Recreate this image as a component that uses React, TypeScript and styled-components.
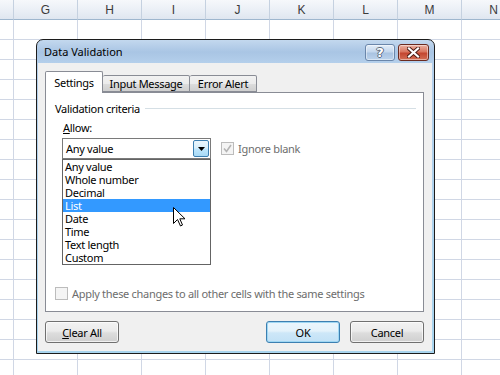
import React from 'react';
import styled, { createGlobalStyle } from 'styled-components';

const GlobalStyle = createGlobalStyle`
    html, body {
        margin: 0;
        padding: 0;
        background: #ffffff;
        overflow: hidden;
    }
    body {
        font-family: 'Noto Sans', 'Liberation Sans', sans-serif;
        font-size: 11px;
        color: #000;
    }
`;

const columns = ['', 'G', 'H', 'I', 'J', 'K', 'L', 'M', 'N'];
const rowCount = 18;
const listItems = ['Any value', 'Whole number', 'Decimal', 'List', 'Date', 'Time', 'Text length', 'Custom'];

const Sheet = styled.div`
    position: relative;
    width: 500px;
    height: 375px;
    overflow: hidden;
`;

const Grid = styled.div`
    display: grid;
    grid-template-columns: 14px repeat(8, 64px);
    grid-template-rows: 20px;
    grid-auto-rows: 20px;
`;

const HeaderCell = styled.div`
    box-sizing: border-box;
    border-right: 1px solid #c5d1e0;
    border-bottom: 1px solid #9eb6ce;
    background: linear-gradient(to bottom, #f6f8fb 0%, #e9eef5 60%, #dfe6f0 100%);
    color: #3b3b3b;
    font-family: 'Liberation Sans', sans-serif;
    font-size: 12px;
    display: flex;
    align-items: center;
    justify-content: center;
`;

const Cell = styled.div`
    box-sizing: border-box;
    border-right: 1px solid #d0d7e5;
    border-bottom: 1px solid #d0d7e5;
`;

const Dialog = styled.div`
    position: absolute;
    left: 36px;
    top: 39px;
    width: 399px;
    height: 315px;
    box-sizing: border-box;
    border: 1px solid #1c1c1c;
    border-radius: 7px 7px 0 0;
    background: linear-gradient(to bottom, #c3d8ee 0px, #a9c5e4 12px, #b4cfeb 23px, #a8d4ee 100%);
    padding: 0 2px 2px 1px;
    display: flex;
    flex-direction: column;
`;

const TitleBar = styled.div`
    height: 23px;
    display: flex;
    justify-content: space-between;
    align-items: flex-start;
    padding-left: 6px;
`;

const TitleText = styled.span`
    font-size: 11px;
    line-height: 23px;
    color: #000;
`;

const CaptionButtons = styled.div`
    display: flex;
    gap: 3px;
    margin-top: 4px;
    margin-right: 3px;
`;

const CaptionButton = styled.div<{ $close?: boolean }>`
    width: ${p => (p.$close ? 31 : 30)}px;
    height: 17px;
    box-sizing: border-box;
    border-radius: 3px;
    border: 1px solid ${p => (p.$close ? '#6a2a1f' : '#6a86aa')};
    background: ${p =>
        p.$close
            ? 'linear-gradient(to bottom, #eab1a2 0%, #d9765f 45%, #c44630 55%, #d36f55 100%)'
            : 'linear-gradient(to bottom, #e3edf8 0%, #c4d7ed 45%, #a9c3e1 55%, #bcd3ec 100%)'};
    box-shadow: inset 0 0 0 1px rgba(255, 255, 255, 0.45);
    display: flex;
    align-items: center;
    justify-content: center;
`;

const HelpGlyph = styled.span`
    font-family: 'DejaVu Sans', sans-serif;
    font-weight: bold;
    font-size: 13px;
    color: #ffffff;
    text-shadow: 1px 0 0 #5b6a7e, -1px 0 0 #5b6a7e, 0 1px 0 #5b6a7e, 0 -1px 0 #5b6a7e;
    line-height: 1;
`;

const Body = styled.div`
    flex: 1;
    background: #f0f0f0;
    padding: 8px 8px 8px 7px;
    display: flex;
    flex-direction: column;
    letter-spacing: -0.3px;
`;

const TabStrip = styled.div`
    display: flex;
    align-items: flex-end;
    height: 21px;
    position: relative;
    z-index: 1;
`;

const Tab = styled.div<{ $active?: boolean; $width: number }>`
    box-sizing: border-box;
    width: ${p => p.$width}px;
    height: ${p => (p.$active ? 22 : 17)}px;
    margin-bottom: ${p => (p.$active ? -1 : 0)}px;
    border: 1px solid #898c95;
    border-bottom: ${p => (p.$active ? 'none' : '1px solid #898c95')};
    border-left: ${p => (p.$active ? '1px solid #898c95' : 'none')};
    border-radius: 2px 2px 0 0;
    background: ${p => (p.$active ? '#ffffff' : 'linear-gradient(to bottom, #f2f2f2 0%, #ebebeb 50%, #dddddd 51%, #cfcfcf 100%)')};
    display: flex;
    align-items: center;
    justify-content: center;
    font-size: 11px;
`;

const Panel = styled.div`
    height: 220px;
    box-sizing: border-box;
    border: 1px solid #898c95;
    background: #ffffff;
    padding: 8px 7px 10px 9px;
    display: flex;
    flex-direction: column;
`;

const GroupHeading = styled.div`
    display: flex;
    align-items: center;
    height: 15px;
    &::after {
        content: '';
        flex: 1;
        height: 1px;
        background: #d5dfe5;
        margin-left: 5px;
    }
`;

const Indented = styled.div`
    padding-left: 8px;
    display: flex;
    flex-direction: column;
`;

const FieldLabel = styled.div`
    margin-top: 4px;
    height: 15px;
    line-height: 15px;
`;

const ComboRow = styled.div`
    margin-top: 3px;
    display: flex;
    align-items: center;
    gap: 10px;
    margin-left: -1px;
`;

const ComboWrap = styled.div`
    position: relative;
`;

const Combo = styled.div`
    width: 149px;
    height: 21px;
    box-sizing: border-box;
    border: 1px solid #7a7a7a;
    background: #ffffff;
    display: flex;
    align-items: center;
    padding: 1px 1px 1px 3px;
`;

const ComboText = styled.span`
    flex: 1;
`;

const DropButton = styled.div`
    width: 16px;
    height: 17px;
    box-sizing: border-box;
    border: 1px solid #3c7fb1;
    border-radius: 2px;
    background: linear-gradient(to bottom, #eaf6fd 0%, #d9f0fc 45%, #bee6fd 55%, #a7d9f5 100%);
    display: flex;
    align-items: center;
    justify-content: center;
`;

const DropList = styled.div`
    position: absolute;
    left: 0;
    top: 100%;
    width: 149px;
    box-sizing: border-box;
    border: 1px solid #646464;
    background: #ffffff;
    z-index: 5;
`;

const ListItem = styled.div<{ $selected?: boolean }>`
    height: 13px;
    line-height: 13px;
    padding-left: 2px;
    background: ${p => (p.$selected ? '#3399ff' : 'transparent')};
    color: ${p => (p.$selected ? '#ffffff' : '#000000')};
`;

const Pointer = styled.svg`
    position: absolute;
    left: 111px;
    top: 69px;
    z-index: 6;
`;

const CheckRow = styled.label`
    display: flex;
    align-items: center;
    gap: 4px;
    color: #6d6d6d;
`;

const CheckBox = styled.span`
    width: 13px;
    height: 13px;
    box-sizing: border-box;
    border: 1px solid #bcbcbc;
    background: #f4f4f4;
    display: flex;
    align-items: center;
    justify-content: center;
`;

const Spacer = styled.div`
    flex: 1;
`;

const ButtonRow = styled.div`
    margin-top: 9px;
    display: flex;
    gap: 10px;
`;

const PushButton = styled.div<{ $default?: boolean; $push?: boolean }>`
    width: 74px;
    height: 22px;
    box-sizing: border-box;
    border: 1px solid ${p => (p.$default ? '#3c7fb1' : '#707070')};
    border-radius: 3px;
    background: ${p =>
        p.$default
            ? 'linear-gradient(to bottom, #eaf6fd 0%, #e4f2fb 45%, #cde7f8 55%, #c2e1f6 100%)'
            : 'linear-gradient(to bottom, #f2f2f2 0%, #ebebeb 45%, #dddddd 55%, #cfcfcf 100%)'};
    box-shadow: inset 0 0 0 1px ${p => (p.$default ? '#9fd7f3' : 'rgba(255,255,255,0.7)')};
    margin-left: ${p => (p.$push ? 'auto' : '0')};
    display: flex;
    align-items: center;
    justify-content: center;
`;

export default function App() {
    return (
        <>
            <GlobalStyle />
            <Sheet>
                <Grid>
                    {columns.map((c, i) => (
                        <HeaderCell key={'h' + i}>{c}</HeaderCell>
                    ))}
                    {Array.from({ length: rowCount }).map((_, r) =>
                        columns.map((_c, i) => <Cell key={r + '-' + i} />)
                    )}
                </Grid>

                <Dialog>
                    <TitleBar>
                        <TitleText>Data Validation</TitleText>
                        <CaptionButtons>
                            <CaptionButton>
                                <HelpGlyph>?</HelpGlyph>
                            </CaptionButton>
                            <CaptionButton $close>
                                <svg width='13' height='11' viewBox='0 0 13 11'>
                                    <path d='M2 1.5 L11 9.5 M11 1.5 L2 9.5' stroke='#4a1a12' strokeWidth='4' strokeLinecap='square' />
                                    <path d='M2 1.5 L11 9.5 M11 1.5 L2 9.5' stroke='#ffffff' strokeWidth='2.2' strokeLinecap='square' />
                                </svg>
                            </CaptionButton>
                        </CaptionButtons>
                    </TitleBar>

                    <Body>
                        <TabStrip>
                            <Tab $active $width={58}>Settings</Tab>
                            <Tab $width={87}>Input Message</Tab>
                            <Tab $width={67}>Error Alert</Tab>
                        </TabStrip>
                        <Panel>
                            <GroupHeading>Validation criteria</GroupHeading>
                            <Indented>
                                <FieldLabel>
                                    <u>A</u>llow:
                                </FieldLabel>
                                <ComboRow>
                                    <ComboWrap>
                                        <Combo>
                                            <ComboText>Any value</ComboText>
                                            <DropButton>
                                                <svg width='7' height='4' viewBox='0 0 7 4'>
                                                    <path d='M0 0 H7 L3.5 4 Z' fill='#000' />
                                                </svg>
                                            </DropButton>
                                        </Combo>
                                        <DropList>
                                            {listItems.map(item => (
                                                <ListItem key={item} $selected={item === 'List'}>
                                                    {item}
                                                </ListItem>
                                            ))}
                                        </DropList>
                                        <Pointer width='13' height='20' viewBox='0 0 13 20'>
                                            <path
                                                d='M0.5 0.5 L0.5 16.5 L4.5 12.5 L7.5 19 L9.5 18 L6.8 11.8 L12 11.8 Z'
                                                fill='#ffffff'
                                                stroke='#000000'
                                                strokeWidth='1'
                                                strokeLinejoin='miter'
                                            />
                                        </Pointer>
                                    </ComboWrap>
                                    <CheckRow>
                                        <CheckBox>
                                            <svg width='9' height='9' viewBox='0 0 9 9'>
                                                <path d='M1 4.5 L3.5 7.5 L8 1' fill='none' stroke='#b4b4b4' strokeWidth='1.6' />
                                            </svg>
                                        </CheckBox>
                                        Ignore blank
                                    </CheckRow>
                                </ComboRow>
                            </Indented>
                            <Spacer />
                            <CheckRow>
                                <CheckBox />
                                Apply these changes to all other cells with the same settings
                            </CheckRow>
                        </Panel>
                        <ButtonRow>
                            <PushButton>
                                <span>
                                    <u>C</u>lear All
                                </span>
                            </PushButton>
                            <PushButton $default $push>
                                OK
                            </PushButton>
                            <PushButton>Cancel</PushButton>
                        </ButtonRow>
                    </Body>
                </Dialog>
            </Sheet>
        </>
    );
}
